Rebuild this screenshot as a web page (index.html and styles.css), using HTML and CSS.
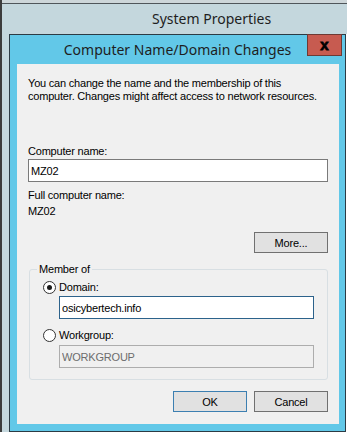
FILE: index.html
```html
<!DOCTYPE html>
<html lang="en">
<head>
    <meta charset="UTF-8">
    <meta name="viewport" content="width=device-width, initial-scale=1.0">
    <title>Computer Name/Domain Changes</title>
    <link rel="stylesheet" href="styles.css">
</head>
<body>
    <div class="screen">
        <div class="sys-window">
            <div class="sys-title">System Properties</div>
            <div class="sys-body">
                <div class="dialog">
                    <div class="dlg-title">
                        <span>Computer Name/Domain Changes</span>
                        <button class="close">x</button>
                    </div>
                    <div class="dlg-client">
                        <p class="intro">You can change the name and the membership of this<br>computer. Changes might affect access to network resources.</p>

                        <div class="lbl name-lbl">Computer name:</div>
                        <input class="field" type="text" value="MZ02">

                        <div class="lbl full-lbl">Full computer name:</div>
                        <div class="lbl full-val">MZ02</div>

                        <div class="more-row">
                            <button class="btn">More...</button>
                        </div>

                        <fieldset class="group">
                            <legend>Member of</legend>
                            <div class="radio domain-row"><span class="dot on"></span>Domain:</div>
                            <input class="field sub focus" type="text" value="osicybertech.info">
                            <div class="radio wg-row"><span class="dot"></span>Workgroup:</div>
                            <input class="field sub off" type="text" value="WORKGROUP" disabled>
                        </fieldset>

                        <div class="actions">
                            <button class="btn default">OK</button>
                            <button class="btn">Cancel</button>
                        </div>
                    </div>
                </div>
            </div>
        </div>
    </div>
</body>
</html>
```

FILE: styles.css
```css
body {
    margin: 0;
    padding: 0;
    font-family: "Liberation Sans", Arial, sans-serif;
    font-size: 11px;
    color: #000;
}

.screen {
    width: 345px;
    height: 432px;
    overflow: hidden;
    background: #cdd6d9;
    border-left: 2px solid #3c3c3c;
}

.sys-window {
    margin-top: 3px;
    background: #c4d7dd;
    border-top: 1px solid #4f565a;
    height: 428px;
}

.sys-title {
    height: 30px;
    line-height: 30px;
    padding-left: 150px;
    font-family: "Noto Sans", sans-serif;
    font-size: 14px;
    color: #1e1e1e;
}

.sys-body {
    background: #fff;
    border-left: 7px solid #c4d7dd;
    height: 398px;
}

.dialog {
    position: relative;
    width: 335px;
    height: 396px;
    background: #62c8e8;
    border: 1px solid #2c3b44;
}

.dlg-title {
    height: 29px;
    line-height: 29px;
    text-align: center;
    font-family: "Noto Sans", sans-serif;
    font-size: 14px;
    color: #1e1e1e;
}

.close {
    position: absolute;
    top: -1px;
    right: 3px;
    width: 35px;
    height: 22px;
    padding: 0;
    background: #c75b50;
    border: 1px solid #6e3a34;
    font-family: "Liberation Sans", Arial, sans-serif;
    font-weight: bold;
    font-size: 15px;
    line-height: 16px;
    color: #000;
    -webkit-text-stroke: 0.8px #000;
}

.dlg-client {
    height: 360px;
    margin: 0 6px 0 7px;
    padding: 0 11px;
    box-sizing: border-box;
    background: #f0f0f0;
    overflow: hidden;
    letter-spacing: -0.2px;
}

.intro {
    margin: 13px 0 0;
    line-height: 13px;
}

.lbl {
    line-height: 13px;
}

.name-lbl {
    margin-top: 42px;
}

.field {
    display: block;
    box-sizing: border-box;
    width: 300px;
    height: 23px;
    margin: 1px 0 0;
    padding: 0 2px;
    border: 1px solid #7a7a7a;
    background: #fff;
    font-family: inherit;
    font-size: 11px;
    letter-spacing: -0.2px;
    color: #000;
    outline: none;
}

.full-lbl {
    margin-top: 7px;
}

.full-val {
    margin-top: 3px;
}

.more-row {
    display: flex;
    justify-content: flex-end;
    margin-top: 14px;
}

.btn {
    box-sizing: border-box;
    width: 74px;
    height: 21px;
    padding: 0;
    background: #e1e1e1;
    border: 1px solid #707070;
    font-family: inherit;
    font-size: 11px;
    letter-spacing: -0.2px;
    color: #000;
}

.btn.default {
    border-color: #3c7fb1;
}

.group {
    margin: 10px 0 0 1px;
    padding: 5px 0 11px 13px;
    border: 1px solid #d8dfe3;
    border-radius: 3px;
}

.group legend {
    margin-left: -6px;
    padding: 0 2px;
    line-height: 13px;
}

.radio {
    display: flex;
    align-items: center;
    gap: 3px;
    line-height: 13px;
}

.wg-row {
    margin-top: 10px;
}

.dot {
    position: relative;
    box-sizing: border-box;
    width: 13px;
    height: 13px;
    border: 1px solid #333;
    border-radius: 50%;
    background: #fff;
}

.dot.on::after {
    content: "";
    position: absolute;
    left: 3px;
    top: 3px;
    width: 5px;
    height: 5px;
    border-radius: 50%;
    background: #1a1a1a;
}

.field.sub {
    width: 255px;
    margin-left: 16px;
    margin-top: 2px;
}

.field.focus {
    border-color: #2c628b;
}

.field.off {
    margin-top: 3px;
    background: #f0f0f0;
    border-color: #adadad;
    color: #6d6d6d;
}

.actions {
    display: flex;
    justify-content: flex-end;
    gap: 7px;
    margin-top: 11px;
}
```
